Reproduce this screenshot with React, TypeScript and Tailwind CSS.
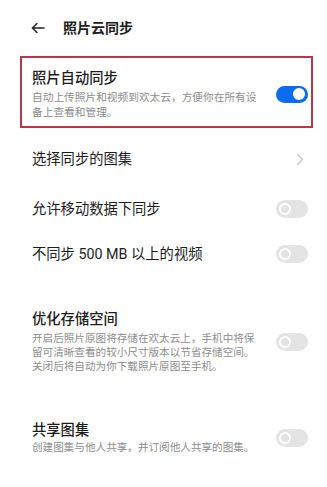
import React from "react";

function Toggle({ on }: { on?: boolean }) {
  if (on) {
    return (
      <div className="flex h-[17px] w-[32px] shrink-0 items-center justify-end rounded-full bg-[#0b6cf0] pr-[3px]">
        <div className="h-[12px] w-[12px] rounded-full bg-white" />
      </div>
    );
  }
  return (
    <div className="flex h-[18px] w-[32px] shrink-0 items-center rounded-full bg-[#e4e4e4] pl-[3px]">
      <div className="h-[12px] w-[12px] rounded-full border-[2.5px] border-white" />
    </div>
  );
}

export default function App() {
  return (
    <div
      className="h-[487px] w-[327px] overflow-hidden bg-white text-[#1c1c1c]"
      style={{ fontFamily: 'Roboto, "Noto Sans CJK SC", sans-serif' }}
    >
      {/* header */}
      <div className="flex h-[56px] items-center pl-[31px]">
        <svg width="14" height="12" viewBox="0 0 14 12" fill="none" stroke="#222" strokeWidth="1.5" strokeLinecap="round" strokeLinejoin="round">
          <path d="M1.5 6H13" />
          <path d="M6 1.5L1.5 6L6 10.5" />
        </svg>
        <span className="ml-[18px] text-[14px] font-semibold leading-5">照片云同步</span>
      </div>

      {/* highlighted row */}
      <div className="ml-[20px] mr-[14px] h-[72px] border-2 border-[#b8374a] pl-[10px] pr-[3px] pt-[10px]">
        <div className="flex items-center justify-between">
          <div>
            <div className="text-[14.3px] font-medium leading-5">照片自动同步</div>
            <div className="mt-[2px] text-[10.7px] leading-[15px] text-[#8c8c8c]">
              自动上传照片和视频到欢太云，方便你在所有设
              <br />
              备上查看和管理。
            </div>
          </div>
          <Toggle on />
        </div>
      </div>

      <div className="mt-[6px] flex h-[50px] items-center justify-between pl-[32px] pr-[23px]">
        <span className="text-[14.3px] leading-5">选择同步的图集</span>
        <svg width="8" height="13" viewBox="0 0 8 13" fill="none" stroke="#c2c2c2" strokeWidth="1.2" strokeLinecap="round" strokeLinejoin="round">
          <path d="M1.5 1.5L6.5 6.5L1.5 11.5" />
        </svg>
      </div>

      <div className="flex h-[50px] items-center justify-between pl-[32px] pr-[19px]">
        <span className="text-[14.3px] leading-5">允许移动数据下同步</span>
        <Toggle />
      </div>

      <div className="flex h-[40px] items-center justify-between pl-[32px] pr-[19px]">
        <span className="text-[14.3px] leading-5">不同步 500 MB 以上的视频</span>
        <Toggle />
      </div>

      <div className="mt-[35px] flex items-center justify-between pl-[32px] pr-[19px]">
        <div>
          <div className="text-[14.3px] font-medium leading-5">优化存储空间</div>
          <div className="mt-[3px] text-[10.6px] leading-[14px] text-[#8c8c8c]">
            开启后照片原图将存储在欢太云上，手机中将保
            <br />
            留可清晰查看的较小尺寸版本以节省存储空间。
            <br />
            关闭后将自动为你下载照片原图至手机。
          </div>
        </div>
        <Toggle />
      </div>

      <div className="mt-[46px] flex items-center justify-between pl-[32px] pr-[19px]">
        <div>
          <div className="text-[14.3px] font-medium leading-5">共享图集</div>
          <div className="mt-[1px] text-[10.6px] leading-[14px] text-[#8c8c8c]">
            创建图集与他人共享，并订阅他人共享的图集。
          </div>
        </div>
        <Toggle />
      </div>
    </div>
  );
}
